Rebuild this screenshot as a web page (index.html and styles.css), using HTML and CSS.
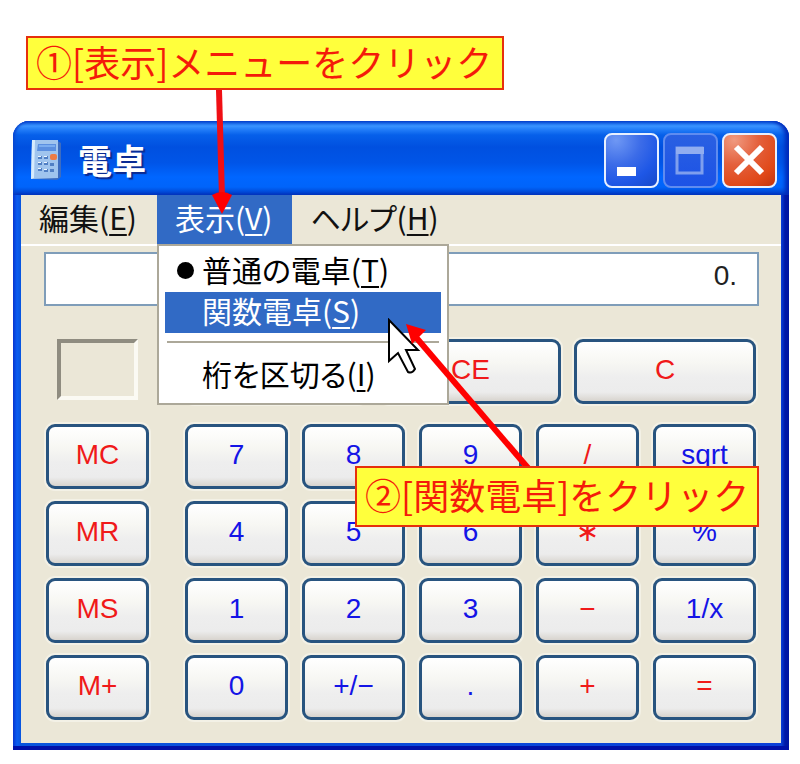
FILE: index.html
```html
<!DOCTYPE html>
<html lang="ja">
<head>
    <meta charset="UTF-8">
    <meta name="viewport" content="width=device-width, initial-scale=1.0">
    <title>電卓</title>
    <link rel="stylesheet" href="styles.css">
</head>
<body>
    <div class="callout step-one">①[表示]メニューをクリック
        <svg class="arrow-one" width="24" height="124" viewBox="0 0 24 124">
            <path d="M9 0 L12 108" stroke="#f00f14" stroke-width="6"/>
            <path d="M2 105 Q12 99 22 105 L12 124 Z" fill="#ff0000"/>
        </svg>
    </div>

    <main class="window">
        <header class="title-bar">
            <svg class="app-icon" width="32" height="42" viewBox="0 0 32 42">
                <path d="M3 2 L26 1 L31 4 V38 L27 41 L1 40 Z" fill="#3d6cc0"/>
                <path d="M2 1 H28 V39 L1 40 Z" fill="#a0c4ee"/>
                <path d="M2 1 H5 L4 39 L1 40 Z" fill="#d7ebfd"/>
                <path d="M8 5 H26 V12 H7 Z" fill="#5b8fe0"/>
                <path d="M9 6 H25 V8 H9 Z" fill="#7badf0"/>
                <path d="M8 17 h4 v3 h-4z M14 17 h4 v3 h-4z M8 23 h4 v3 h-4z M14 23 h4 v3 h-4z M20 24 h4 v3 h-4z M8 29 h4 v3 h-4z M14 30 h4 v3 h-4z M20 30 h4 v3 h-4z" fill="#517fc4"/>
                <path d="M8 17 h3 v1 h-3z M14 17 h3 v1 h-3z M8 23 h3 v1 h-3z M14 23 h3 v1 h-3z M8 29 h3 v1 h-3z M14 30 h3 v1 h-3z" fill="#eef6ff"/>
                <rect x="20" y="15" width="7" height="6" rx="2" fill="#ee7b45"/>
            </svg>
            <h1 class="title">電卓</h1>
            <div class="window-buttons">
                <button class="win-btn" type="button" aria-label="最小化">
                    <svg width="51" height="51" viewBox="0 0 51 51"><rect x="11" y="32" width="19" height="9" fill="#fff"/></svg>
                </button>
                <button class="win-btn maximize" type="button" aria-label="最大化" disabled>
                    <svg width="51" height="51" viewBox="0 0 51 51">
                        <path d="M12 13 H37 V38 H12 Z" fill="none" stroke="#7f9fee" stroke-width="3"/>
                        <rect x="11" y="12" width="28" height="7" fill="#91adf0"/>
                    </svg>
                </button>
                <button class="win-btn close" type="button" aria-label="閉じる">
                    <svg width="51" height="51" viewBox="0 0 51 51"><path d="M12 12 L38 38 M38 12 L12 38" stroke="#fff" stroke-width="6"/></svg>
                </button>
            </div>
        </header>

        <div class="client">
            <nav class="menu-bar">
                <button class="menu-title" type="button">編集(<u>E</u>)</button>
                <div class="menu">
                    <button class="menu-title open" type="button">表示(<u>V</u>)</button>
                    <div class="dropdown">
                        <button class="menu-item checked" type="button">普通の電卓(<u>T</u>)</button>
                        <button class="menu-item selected" type="button">関数電卓(<u>S</u>)</button>
                        <hr class="separator">
                        <button class="menu-item" type="button">桁を区切る(<u>I</u>)</button>
                    </div>
                </div>
                <button class="menu-title" type="button">ヘルプ(<u>H</u>)</button>
            </nav>

            <input class="display" type="text" value="0." aria-label="表示" readonly>

            <div class="keypad">
                <div class="memory">
                    <div class="memory-slot"><div class="memory-state"></div></div>
                    <button class="key red" type="button">MC</button>
                    <button class="key red" type="button">MR</button>
                    <button class="key red" type="button">MS</button>
                    <button class="key red" type="button">M+</button>
                </div>
                <div class="main-keys">
                    <div class="clear-keys">
                        <button class="key red" type="button" aria-label="Backspace"></button>
                        <button class="key red" type="button">CE</button>
                        <button class="key red" type="button">C</button>
                    </div>
                    <div class="keys">
                        <button class="key" type="button">7</button>
                        <button class="key" type="button">8</button>
                        <button class="key" type="button">9</button>
                        <button class="key red" type="button">/</button>
                        <button class="key" type="button">sqrt</button>
                        <button class="key" type="button">4</button>
                        <button class="key" type="button">5</button>
                        <button class="key" type="button">6</button>
                        <button class="key red" type="button">∗</button>
                        <button class="key" type="button">%</button>
                        <button class="key" type="button">1</button>
                        <button class="key" type="button">2</button>
                        <button class="key" type="button">3</button>
                        <button class="key red" type="button">−</button>
                        <button class="key" type="button">1/x</button>
                        <button class="key" type="button">0</button>
                        <button class="key" type="button">+/−</button>
                        <button class="key" type="button">.</button>
                        <button class="key red" type="button">+</button>
                        <button class="key red" type="button">=</button>
                    </div>
                </div>
            </div>
        </div>

        <!-- 手順2の矢印とマウスカーソル -->
        <svg class="pointer" width="150" height="150" viewBox="0 0 150 150">
            <path d="M5 2 V43 L14 35 L24 54 Q28 56 31 51 L22 32 H34 Z" fill="#fff" stroke="#000" stroke-width="2"/>
            <path d="M30 17 L144 150" stroke="#ff0000" stroke-width="6"/>
            <path d="M22 6 L42 12 L28 26 Z" fill="#ff0000"/>
        </svg>
        <div class="callout step-two">②[関数電卓]をクリック</div>
    </main>
</body>
</html>
```

FILE: styles.css
```css
* {
    box-sizing: border-box;
    margin: 0;
    padding: 0;
}

body {
    padding: 36px 11px 14px 13px;
    background: #fff;
    font-family: "Noto Sans CJK JP", sans-serif;
}

button {
    border: none;
    background: none;
    font-family: inherit;
}

.callout {
    border: 2px solid #e6300c;
    padding: 0 8px 4px;
    background: #ffff3c;
    color: #f41b0a;
    font-size: 36px;
    line-height: 46px;
    white-space: nowrap;
}

.step-one {
    position: relative;
    width: max-content;
    margin: 0 0 31px 13px;
    padding-right: 10px;
}

.arrow-one {
    position: absolute;
    z-index: 5;
    top: 52px;
    left: 182px;
}

.window {
    position: relative;
    padding: 0 8px 7px;
    border-radius: 16px 16px 0 0;
    background: linear-gradient(90deg, #0735d0 0, #0a5cf0 4px, #0855dd 8px, #0a3fd8 calc(100% - 8px), #0019a8 calc(100% - 4px), #0014a0 100%);
    box-shadow: inset 0 -4px 0 #0010a8;
}

/* タイトルバー */
.title-bar {
    display: flex;
    align-items: center;
    height: 74px;
    margin: 0 -8px;
    padding: 4px 12px 0 17px;
    border-radius: 16px 16px 0 0;
    background: linear-gradient(#0a5be0 0, #3a94ff 5px, #2580fa 8px, #0660ea 14px, #0050e0 26px, #0055e8 42px, #0066ff 56px, #0064fa 66px, #0046d2 72px, #0036b8 74px);
    box-shadow: inset -4px 0 4px #0028b8, inset 2px 0 3px #0a48d0;
}

.title {
    flex: 1;
    margin-left: 16px;
    color: #fff;
    font-size: 34px;
    line-height: 40px;
    text-shadow: 2px 2px 1px #0a2a90;
}

.window-buttons {
    display: flex;
    gap: 4px;
}

.win-btn {
    width: 55px;
    height: 55px;
    border: 2px solid #e8f0ff;
    border-radius: 8px;
    background: radial-gradient(circle at 20% 10%, #6f98f4 0, #3c6ce8 40%, #1e57e6 70%, #1648c8 100%);
}

.win-btn svg {
    display: block;
}

.maximize {
    border-color: #5f8cf0;
    background: linear-gradient(#2a60e2, #1c52e6);
}

.close {
    background: radial-gradient(circle at 20% 10%, #f09a80 0, #e4603c 40%, #e04818 75%, #c03410 100%);
}

.client {
    padding-bottom: 23px;
    background: #ebe7d7;
}

/* メニュー */
.menu-bar {
    display: flex;
    height: 51px;
    border-bottom: 2px solid #fff;
}

.menu-bar u {
    text-decoration-thickness: 2px;
    text-underline-offset: 4px;
}

.menu {
    position: relative;
}

.menu-title,
.menu-item {
    font-size: 30px;
    font-feature-settings: "palt";
    white-space: nowrap;
}

.menu-title {
    height: 49px;
    padding: 0 20px 6px 18px;
    color: #111;
    line-height: 36px;
}

.open {
    background: #316ac5;
    color: #fff;
}

.dropdown {
    position: absolute;
    z-index: 2;
    top: 49px;
    left: 0;
    width: 292px;
    padding: 5px 6px 7px;
    border: 2px solid #aca899;
    background: #fff;
}

.menu-item {
    position: relative;
    display: block;
    width: 100%;
    height: 41px;
    padding: 0 0 6px 37px;
    color: #000;
    line-height: 34px;
    text-align: left;
}

.checked::before {
    content: "";
    position: absolute;
    top: 11px;
    left: 12px;
    width: 17px;
    height: 17px;
    border-radius: 50%;
    background: #000;
}

.selected {
    background: #316ac5;
    color: #fff;
}

.separator {
    margin: 8px 2px 12px;
    border: none;
    border-top: 2px solid #aca899;
}

.display {
    display: block;
    width: calc(100% - 45px);
    height: 54px;
    margin: 6px 22px 0 23px;
    padding: 0 20px 6px;
    border: 2px solid #7f9db9;
    background: #fff;
    color: #222;
    font-family: "Liberation Sans", Arial, sans-serif;
    font-size: 28px;
    text-align: right;
}

/* キー */
.keypad {
    display: flex;
    gap: 36px;
    padding: 33px 25px 0;
}

.memory {
    display: grid;
    flex: 0 0 103px;
    gap: 12px;
    align-content: start;
}

.memory-slot {
    height: 73px;
    padding-left: 11px;
}

.memory-state {
    width: 81px;
    height: 61px;
    border: 4px solid;
    border-color: #8f8c80 #fbfaf3 #fbfaf3 #8f8c80;
}

.main-keys {
    flex: 1;
}

.clear-keys {
    display: grid;
    grid-template-columns: repeat(3, 1fr);
    gap: 13px;
    margin-bottom: 20px;
}

.keys {
    display: grid;
    grid-template-columns: repeat(5, 1fr);
    gap: 12px 14px;
}

.key {
    height: 65px;
    padding-bottom: 4px;
    border: 3px solid #28547f;
    border-radius: 9px;
    background: linear-gradient(#fff 0, #f7f7f3 35%, #eeeeee 60%, #ececec 85%, #d8d4ce 100%);
    box-shadow: 0 0 0 2px #f3f1e6;
    color: #1414e6;
    font-family: "Liberation Sans", Arial, "DejaVu Sans", sans-serif;
    font-size: 28px;
}

.red {
    color: #f01919;
}

.pointer {
    position: absolute;
    z-index: 3;
    top: 197px;
    left: 371px;
}

.step-two {
    position: absolute;
    z-index: 4;
    top: 345px;
    left: 342px;
    line-height: 53px;
}
```
